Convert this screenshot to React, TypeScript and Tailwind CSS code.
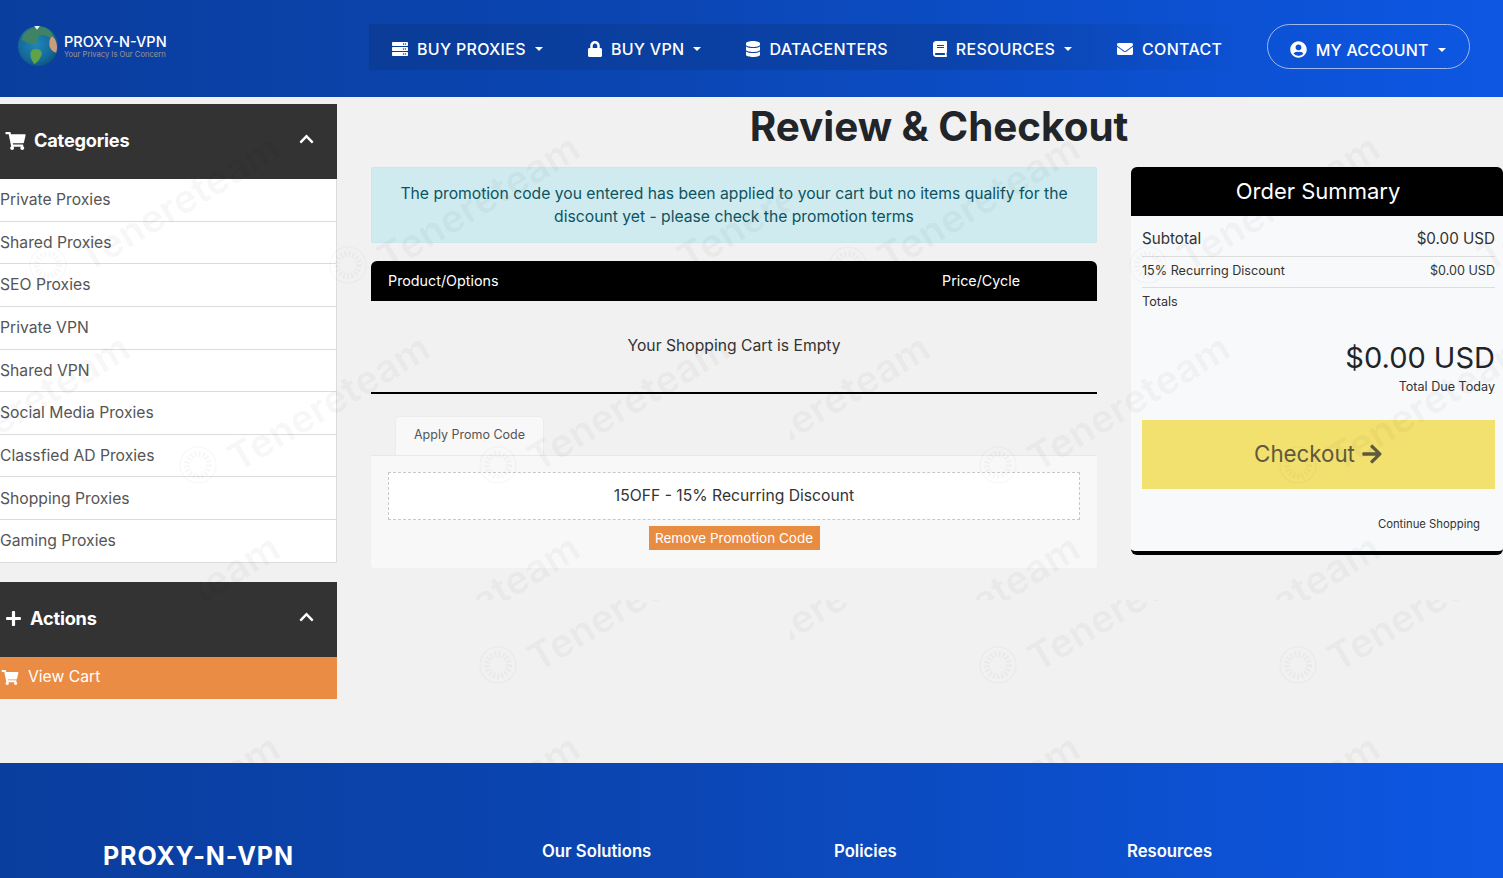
import React from "react";
import { FaServer, FaLock, FaDatabase, FaBook, FaEnvelope, FaUserCircle, FaShoppingCart, FaPlus, FaChevronUp, FaArrowRight } from "react-icons/fa";

const Caret = () => (
  <span className="ml-[9px] inline-block h-0 w-0 border-x-[4.5px] border-t-[4.5px] border-x-transparent border-t-white" />
);

const navItems = [
  { icon: <FaServer className="h-[16px] w-[18px]" />, label: "BUY PROXIES", caret: true, gap: "gap-[8px]" },
  { icon: <FaLock className="h-[16px] w-[16px]" />, label: "BUY VPN", caret: true, gap: "gap-[8px]" },
  { icon: <FaDatabase className="h-[16px] w-[16px]" />, label: "DATACENTERS", caret: false, gap: "gap-[8px]" },
  { icon: <FaBook className="h-[16px] w-[16px]" />, label: "RESOURCES", caret: true, gap: "gap-[8px]" },
  { icon: <FaEnvelope className="h-[16px] w-[18px]" />, label: "CONTACT", caret: false, gap: "gap-[8px]" },
];

const cats = ["Private Proxies", "Shared Proxies", "SEO Proxies", "Private VPN", "Shared VPN", "Social Media Proxies", "Classfied AD Proxies", "Shopping Proxies", "Gaming Proxies"];

type WM = { x: number; y: number; clip?: [number, number, number, number]; seal?: boolean };
const marks: WM[] = [
  { x: 80, y: 265, seal: true }, { x: 380, y: 265, seal: true }, { x: 680, y: 265, clip: [650, 100, 140, 200], seal: false },
  { x: 880, y: 265, seal: true }, { x: 1180, y: 265, seal: true }, { x: 1480, y: 265 },
  { x: -70, y: 465 }, { x: 230, y: 465, seal: true }, { x: 530, y: 465, seal: true }, { x: 730, y: 465, clip: [790, 300, 200, 200] },
  { x: 1030, y: 465, seal: true }, { x: 1330, y: 465, seal: true },
  { x: 80, y: 665, clip: [200, 520, 100, 80] }, { x: 380, y: 665, clip: [465, 520, 130, 80] }, { x: 880, y: 665, clip: [965, 520, 130, 80] }, { x: 1180, y: 665, clip: [1265, 520, 130, 80] },
  { x: 530, y: 665, clip: [500, 600, 200, 100], seal: true }, { x: 730, y: 665, clip: [790, 600, 60, 100] },
  { x: 1030, y: 665, clip: [1000, 600, 200, 100], seal: true }, { x: 1330, y: 665, clip: [1300, 600, 200, 100], seal: true },
  { x: 80, y: 865, clip: [230, 735, 60, 30] }, { x: 380, y: 865, clip: [530, 735, 60, 30] }, { x: 880, y: 865, clip: [1030, 735, 60, 30] }, { x: 1180, y: 865, clip: [1330, 735, 60, 30] },
];

const Watermark = () => (
  <svg className="pointer-events-none absolute left-0 top-0 z-20" width="1503" height="763" viewBox="0 0 1503 763">
    <defs>
      {marks.map((m, i) => m.clip ? (
        <clipPath key={i} id={`wm${i}`}>
          <rect x={m.clip[0]} y={m.clip[1]} width={m.clip[2]} height={m.clip[3]} />
        </clipPath>
      ) : null)}
    </defs>
    {marks.map((m, i) => (
      <g key={i}>
        <g clipPath={m.clip ? `url(#wm${i})` : undefined}>
          <text
            x={m.x + 8}
            y={m.y + 8}
            transform={`rotate(-31 ${m.x + 8} ${m.y + 8})`}
            fontFamily="Inter, sans-serif"
            fontWeight={700}
            fontSize={39}
            fill="#000"
            fillOpacity={0.03}
          >
            Tenereteam
          </text>
        </g>
        {m.seal ? (
          <g fill="none" stroke="#000" strokeOpacity={0.03}>
            <circle cx={m.x - 32} cy={m.y} r={18} strokeWidth={1.2} />
            <circle cx={m.x - 32} cy={m.y} r={11} strokeWidth={6} strokeDasharray="2 2" />
          </g>
        ) : null}
      </g>
    ))}
  </svg>
);

const Globe = () => (
  <svg width="42" height="42" viewBox="0 0 44 44" className="shrink-0">
    <defs>
      <radialGradient id="gl" cx="45%" cy="45%" r="60%">
        <stop offset="0%" stopColor="#1e88b8" />
        <stop offset="70%" stopColor="#14699a" />
        <stop offset="100%" stopColor="#0f4f7c" />
      </radialGradient>
    </defs>
    <circle cx="22" cy="22" r="21" fill="url(#gl)" />
    <path d="M8 8 C14 2 24 0 30 3 C36 6 40 12 38 15 C32 13 30 9 24 11 C20 14 24 18 18 20 C13 21 8 16 5 16 C5 13 6 10 8 8Z" fill="#3f8366" />
    <path d="M16 26 C21 24 27 26 26 31 C24 36 21 40 18 41 C15 36 12 31 16 26Z" fill="#5fa24a" />
    <path d="M37 12 C42 15 43 24 41 29 C37 28 33 24 34 18 C34 15 35 13 37 12Z" fill="#c99c7d" />
    <path d="M18 1 L24 1 L21 5Z" fill="#e5f3fb" />
  </svg>
);

const bg = "bg-[linear-gradient(90deg,#0a3e9e_0%,#0b46b4_45%,#0d57e3_100%)]";

export default function App() {
  return (
    <div className="relative h-[878px] w-full overflow-hidden bg-[#f1f1f1] font-['Inter','Liberation_Sans',sans-serif]">
      <header className={`flex h-[97px] items-start ${bg}`}>
        <div className="flex w-[369px] items-center pl-[17px] pt-[25px]">
          <Globe />
          <div className="ml-[5px] flex w-[104px] flex-col">
            <span className="whitespace-nowrap text-[14.5px] font-medium leading-[17px] text-white">PROXY-N-VPN</span>
            <span className="whitespace-nowrap text-[7.6px] leading-[9px] text-[#a0948f]">Your Privacy Is Our Concern</span>
          </div>
        </div>
        <nav className="mt-[24px] flex h-[46px] items-center bg-[linear-gradient(90deg,#0a3c98_0%,#0b42a8_60%,rgba(12,70,190,0)_100%)] pt-[3px]">
          {navItems.map((n) => (
            <a key={n.label} className="flex items-center px-[22px] text-[16px] font-medium leading-none text-white">
              <span className={`flex items-center ${n.gap}`}>
                {n.icon}
                <span className="whitespace-nowrap tracking-[0.3px]">{n.label}</span>
              </span>
              {n.caret ? <Caret /> : null}
            </a>
          ))}
        </nav>
        <button className="ml-[23px] mt-[24px] flex h-[45px] w-[203px] items-center justify-center rounded-full border border-[#9db8ee] pr-[2px] pt-[6px] text-[16px] font-medium text-white">
          <FaUserCircle className="mr-[9px] h-[17px] w-[17px]" />
          <span className="whitespace-nowrap tracking-[0.2px]">MY ACCOUNT</span>
          <Caret />
        </button>
      </header>

      <main className="flex h-[666px]">
        <aside className="w-[337px] shrink-0 pt-[7px]">
          <div className="flex h-[75px] items-center justify-between bg-[#333333] pb-[1px] pl-[5px] pr-[21px] text-white">
            <div className="flex items-center gap-[8px]">
              <FaShoppingCart className="h-[18px] w-[21px]" />
              <span className="text-[18.2px] font-bold tracking-[-0.2px]">Categories</span>
            </div>
            <FaChevronUp className="mb-[4px] h-[16px] w-[19px]" />
          </div>
          <div className="border-r border-[#dcdcdc] bg-white">
            {cats.map((c) => (
              <div key={c} className="flex h-[42.65px] items-center border-b border-[#dcdcdc] text-[15.7px] text-[#555555]">
                {c}
              </div>
            ))}
          </div>
          <div className="mt-[19px] flex h-[75px] items-center justify-between bg-[#333333] pb-[1px] pl-[5px] pr-[21px] text-white">
            <div className="flex items-center gap-[8px]">
              <FaPlus className="h-[17px] w-[17px]" />
              <span className="text-[18.2px] font-bold tracking-[-0.2px]">Actions</span>
            </div>
            <FaChevronUp className="mb-[4px] h-[16px] w-[19px]" />
          </div>
          <div className="flex h-[42px] items-center gap-[9px] bg-[#ea8c43] pb-[1px] pl-[1px] text-[15.7px] text-white">
            <FaShoppingCart className="h-[15px] w-[18px]" />
            View Cart
          </div>
        </aside>

        <section className="flex-1 pl-[34px]">
          <h1 className="mt-[4px] h-[66px] pl-[4px] text-center text-[40.4px] font-bold leading-[52px] text-[#212529]">Review &amp; Checkout</h1>
          <div className="flex gap-[34px]">
            <div className="w-[726px] shrink-0">
              <div className="flex h-[76px] items-center justify-center rounded-[2px] border border-[#c9e8ed] bg-[#cfebf0] px-[20px] pb-[1px] text-center text-[15.7px] leading-[23px] text-[#0c5460]">
                <p>The promotion code you entered has been applied to your cart but no items qualify for the discount yet - please check the promotion terms</p>
              </div>
              <div className="mt-[18px] flex h-[40px] items-center rounded-t-[6px] bg-black pl-[17px] text-[14.3px] text-white">
                <span className="w-[554px]">Product/Options</span>
                <span className="w-[78px] whitespace-nowrap text-center">Price/Cycle</span>
              </div>
              <div className="flex h-[93px] justify-center border-b-2 border-black pt-[35px] text-[15.7px] leading-[19px] text-[#333333]">
                Your Shopping Cart is Empty
              </div>
              <div className="ml-[24px] mt-[22px] flex h-[39px] w-[149px] items-center justify-center rounded-t-[4px] border border-b-0 border-[#ececec] bg-[#f8f8f8] pb-[2px] text-[12.5px] text-[#555555]">
                Apply Promo Code
              </div>
              <div className="flex h-[113px] flex-col items-center rounded-b-[4px] border-t border-[#e8e8e8] bg-[#f8f8f8] px-[17px] pt-[16px]">
                <div className="flex h-[48px] w-full items-center justify-center border border-dashed border-[#c8c8c8] bg-white pb-[1px] text-[15.7px] text-[#333333]">
                  15OFF - 15% Recurring Discount
                </div>
                <button className="mt-[6px] flex h-[24px] w-[171px] items-center justify-center bg-[#e88c42] text-[13.5px] text-white">
                  Remove Promotion Code
                </button>
              </div>
            </div>

            <div className="w-[372px] shrink-0">
              <div className="flex h-[49px] items-center justify-center rounded-t-[6px] bg-black pl-[2px] text-[22px] text-white">Order Summary</div>
              <div className="h-[339px] rounded-b-[6px] border-b-4 border-black bg-[#f8f9fa] pl-[11px] pr-[8px] text-[#333333]">
                <div className="flex h-[41px] items-center justify-between border-b border-[#dddddd] pt-[7px] text-[15.2px]">
                  <span>Subtotal</span>
                  <span>$0.00 USD</span>
                </div>
                <div className="flex h-[31px] items-center justify-between border-b border-[#dddddd] pb-[2px] text-[12.6px]">
                  <span>15% Recurring Discount</span>
                  <span>$0.00 USD</span>
                </div>
                <div className="pt-[6px] text-[12.6px] leading-[16px]">Totals</div>
                <div className="mt-[29px] text-right text-[29px] leading-[38px] text-[#212529]">$0.00 USD</div>
                <div className="mt-[2px] text-right text-[12.6px] leading-[16px]">Total Due Today</div>
                <button className="mt-[25px] flex h-[69px] w-full items-center justify-center gap-[6px] bg-[#f2e06f] pb-[2px] text-[22.3px] text-[#5f5a3e]">
                  Checkout <FaArrowRight className="h-[22px] w-[22px]" />
                </button>
                <div className="mt-[27px] pr-[15px] text-right text-[11.3px] leading-[16px]">Continue Shopping</div>
              </div>
            </div>
          </div>
        </section>
      </main>

      <footer className={`flex h-[115px] pl-[103px] text-white ${bg}`}>
        <div className="w-[439px] pt-[77px] text-[25px] font-bold leading-[32px] tracking-[0.9px]">PROXY-N-VPN</div>
        <div className="w-[292px] pt-[77px] text-[16.7px] font-semibold leading-[22px]">Our Solutions</div>
        <div className="w-[293px] pt-[77px] text-[16.7px] font-semibold leading-[22px]">Policies</div>
        <div className="pt-[77px] text-[16.7px] font-semibold leading-[22px]">Resources</div>
      </footer>

      <Watermark />
    </div>
  );
}
